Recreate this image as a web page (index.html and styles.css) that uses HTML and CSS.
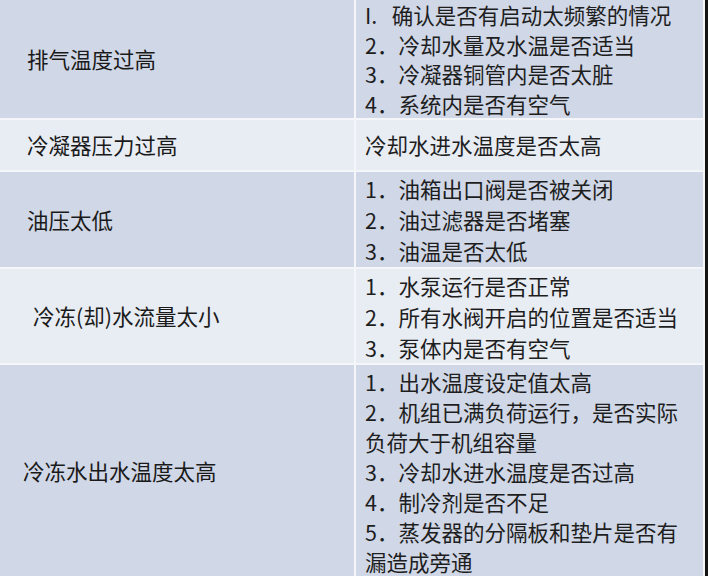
FILE: index.html
```html
<!DOCTYPE html>
<html lang="zh-CN">
<head>
<meta charset="utf-8">
<title>故障排查</title>
<link rel="stylesheet" href="styles.css">
</head>
<body>
<div class="table">
  <div class="cell name dark">排气温度过高</div>
  <div class="cell list dark r1">
    <div>I.&nbsp;&nbsp; 确认是否有启动太频繁的情况</div>
    <div>2．冷却水量及水温是否适当</div>
    <div>3．冷凝器铜管内是否太脏</div>
    <div>4．系统内是否有空气</div>
  </div>

  <div class="cell name light">冷凝器压力过高</div>
  <div class="cell list light">
    <div>冷却水进水温度是否太高</div>
  </div>

  <div class="cell name dark">油压太低</div>
  <div class="cell list dark wide">
    <div>1．油箱出口阀是否被关闭</div>
    <div>2．油过滤器是否堵塞</div>
    <div>3．油温是否太低</div>
  </div>

  <div class="cell name light indent">冷冻(却)水流量太小</div>
  <div class="cell list light wide">
    <div>1．水泵运行是否正常</div>
    <div>2．所有水阀开启的位置是否适当</div>
    <div>3．泵体内是否有空气</div>
  </div>

  <div class="cell name dark outdent">冷冻水出水温度太高</div>
  <div class="cell list dark tall">
    <div>1．出水温度设定值太高</div>
    <div>2．机组已满负荷运行，是否实际<br>负荷大于机组容量</div>
    <div>3．冷却水进水温度是否过高</div>
    <div>4．制冷剂是否不足</div>
    <div>5．蒸发器的分隔板和垫片是否有<br>漏造成旁通</div>
  </div>
</div>
</body>
</html>
```

FILE: styles.css
```css
html, body {
  margin: 0;
  padding: 0;
  background: #ffffff;
}

body {
  width: 708px;
  height: 576px;
  overflow: hidden;
  font-family: "Noto Sans CJK SC", "Noto Sans", sans-serif;
  color: #1e1e1e;
}

.table {
  display: grid;
  grid-template-columns: 354px 347px;
  grid-template-rows: 118px 50px 95px 94px 211px;
  gap: 2px;
  background: #f4f6fa;
  padding-right: 2px;
  border-right: 3px solid #141414;
  width: 703px;
  height: 576px;
  box-sizing: content-box;
}

.cell {
  display: flex;
  flex-direction: column;
  justify-content: center;
  font-size: 21.5px;
  line-height: 29.5px;
  white-space: nowrap;
  overflow: hidden;
}

.dark {
  background: #d0d7e6;
}

.light {
  background: #e8ecf3;
}

.name {
  padding-left: 27px;
  color: #1a1a1a;
}

.name.indent {
  padding-left: 33px;
}

.name.outdent {
  padding-left: 23px;
}

.list {
  padding-left: 9px;
}

.list.wide {
  line-height: 31px;
}

.list.tall {
  line-height: 30px;
  padding-top: 3px;
}
```
